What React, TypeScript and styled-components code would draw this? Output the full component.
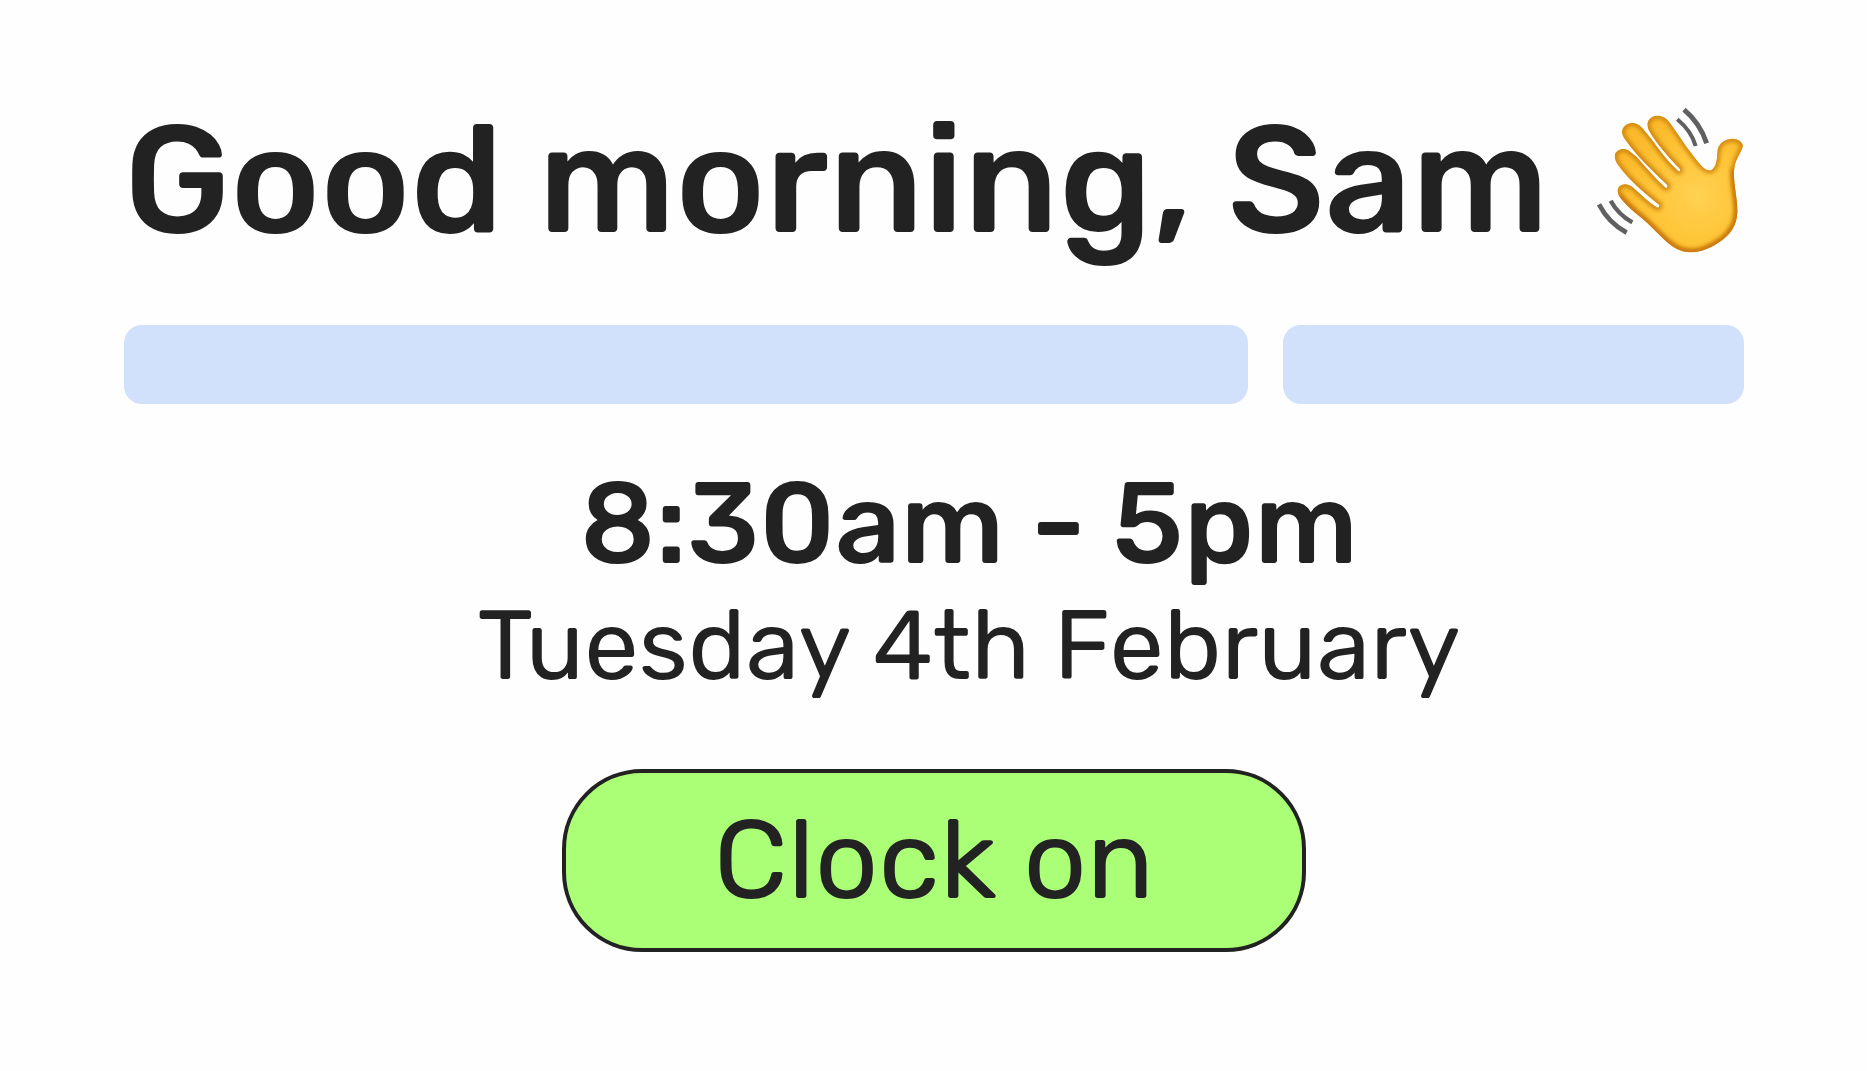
import React from "react";
import styled, { createGlobalStyle } from "styled-components";

const ink = "#222222";

const GlobalStyle = createGlobalStyle`
  *, *::before, *::after { box-sizing: border-box; }
  body {
    margin: 0;
    background: #fefefe;
    color: ${ink};
    font-family: Rubik, Roboto, "Liberation Sans", sans-serif;
  }
`;

const Page = styled.main`
  display: flex;
  flex-direction: column;
  padding: 88px 123px 88px 124px;
`;

const Header = styled.header`
  display: flex;
  align-items: center;
  justify-content: space-between;
`;

const Greeting = styled.h1`
  margin: 0;
  font-size: 152px;
  line-height: 184px;
  font-weight: 500;
  white-space: nowrap;
`;

const Wave = styled.svg`
  flex: none;
  width: 148px;
  height: 147px;
`;

const Timeline = styled.div`
  display: flex;
  gap: 35px;
  margin-top: 53px;
`;

const Segment = styled.div<{ $share: number }>`
  flex: ${(p) => p.$share} 1 0;
  height: 79px;
  border-radius: 18px;
  background: #d1e1fb;
`;

const Shift = styled.section`
  margin-top: 52px;
  padding-left: 70px;
  text-align: center;
`;

const Hours = styled.p`
  margin: 0;
  font-size: 115px;
  line-height: 136px;
  font-weight: 500;
`;

const ShiftDate = styled.p`
  margin: 0;
  font-size: 97px;
  line-height: 108px;
`;

const ClockButton = styled.button`
  align-self: center;
  margin-top: 69px;
  padding: 24px 148px;
  border: 4px solid ${ink};
  border-radius: 80px;
  background: #abff76;
  color: ${ink};
  font: inherit;
  font-size: 111px;
  line-height: 127px;
  white-space: nowrap;
  cursor: pointer;
`;

const HAND =
  "M486 156 C490 142 468 129 449 132 C426 135 411 150 410 172 C409 192 408 213 394 224 C384 231 372 222 360 210 C338 184 318 158 300 130 L268 84 C254 64 234 59 216 65 C198 73 197 92 207 110 C228 146 264 186 298 222 C300 230 295 231 290 226 C262 200 238 168 212 132 L184 98 C168 80 146 80 132 93 C120 106 123 120 134 134 C166 180 214 226 260 270 C262 279 257 281 252 276 C224 250 196 218 168 186 L146 168 C132 158 115 161 106 172 C98 184 104 198 114 212 C146 256 192 294 236 330 C237 338 231 340 226 335 C202 320 182 299 158 278 C143 265 125 264 115 275 C107 286 112 300 122 312 C146 342 176 362 200 384 L242 425 C264 446 288 468 322 471 C356 475 392 459 425 435 C452 414 468 390 470 352 C471 310 458 268 460 228 C462 196 478 180 486 156 Z";

function WavingHand() {
  return (
    <Wave viewBox="46 36 444 441" role="img" aria-label="Waving hand">
      <defs>
        <radialGradient id="skin" gradientUnits="userSpaceOnUse" cx="350" cy="300" r="250">
          <stop offset="0" stopColor="#ffd152" />
          <stop offset="0.5" stopColor="#ffc63a" />
          <stop offset="1" stopColor="#fbb92c" />
        </radialGradient>
        <filter id="soft" x="-20%" y="-20%" width="140%" height="140%">
          <feGaussianBlur stdDeviation="7" />
        </filter>
        <clipPath id="hand">
          <path d={HAND} />
        </clipPath>
      </defs>
      <path d={HAND} fill="url(#skin)" />
      <g clipPath="url(#hand)" fill="none" strokeLinecap="round">
        <path d={HAND} stroke="#cf850f" strokeWidth="17" filter="url(#soft)" />
        <path
          d="M118 306 C146 342 176 362 200 384 L242 425 C264 446 288 468 322 471 C356 475 392 459 425 435 C452 414 468 390 470 352 C471 310 458 268 460 228"
          stroke="#c9750a"
          strokeWidth="16"
          filter="url(#soft)"
        />
      </g>
      <g fill="none" stroke="#5f6062">
        <path d="M290 73 Q332 108 345 153" strokeWidth="12" />
        <path d="M310 44 Q358 84 378 145" strokeWidth="15" />
        <path d="M90 317 Q112 358 155 382" strokeWidth="13" />
        <path d="M55 328 Q84 384 138 413" strokeWidth="14" />
      </g>
    </Wave>
  );
}

export default function App() {
  return (
    <Page>
      <GlobalStyle />
      <Header>
        <Greeting>Good morning, Sam</Greeting>
        <WavingHand />
      </Header>
      <Timeline>
        <Segment $share={1124} />
        <Segment $share={461} />
      </Timeline>
      <Shift>
        <Hours>8:30am - 5pm</Hours>
        <ShiftDate>Tuesday 4th February</ShiftDate>
      </Shift>
      <ClockButton type="button">Clock on</ClockButton>
    </Page>
  );
}
